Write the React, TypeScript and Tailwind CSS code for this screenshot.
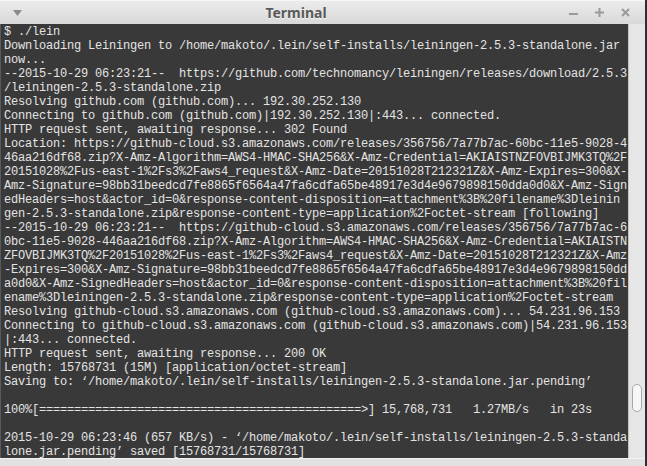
import React from "react";

const lines: string[] = [
  "$ ./lein",
  "Downloading Leiningen to /home/makoto/.lein/self-installs/leiningen-2.5.3-standalone.jar",
  "now...",
  "--2015-10-29 06:23:21--  https://github.com/technomancy/leiningen/releases/download/2.5.3",
  "/leiningen-2.5.3-standalone.zip",
  "Resolving github.com (github.com)... 192.30.252.130",
  "Connecting to github.com (github.com)|192.30.252.130|:443... connected.",
  "HTTP request sent, awaiting response... 302 Found",
  "Location: https://github-cloud.s3.amazonaws.com/releases/356756/7a77b7ac-60bc-11e5-9028-4",
  "46aa216df68.zip?X-Amz-Algorithm=AWS4-HMAC-SHA256&X-Amz-Credential=AKIAISTNZFOVBIJMK3TQ%2F",
  "20151028%2Fus-east-1%2Fs3%2Faws4_request&X-Amz-Date=20151028T212321Z&X-Amz-Expires=300&X-",
  "Amz-Signature=98bb31beedcd7fe8865f6564a47fa6cdfa65be48917e3d4e9679898150dda0d0&X-Amz-Sign",
  "edHeaders=host&actor_id=0&response-content-disposition=attachment%3B%20filename%3Dleinin",
  "gen-2.5.3-standalone.zip&response-content-type=application%2Foctet-stream [following]",
  "--2015-10-29 06:23:21--  https://github-cloud.s3.amazonaws.com/releases/356756/7a77b7ac-6",
  "0bc-11e5-9028-446aa216df68.zip?X-Amz-Algorithm=AWS4-HMAC-SHA256&X-Amz-Credential=AKIAISTN",
  "ZFOVBIJMK3TQ%2F20151028%2Fus-east-1%2Fs3%2Faws4_request&X-Amz-Date=20151028T212321Z&X-Amz",
  "-Expires=300&X-Amz-Signature=98bb31beedcd7fe8865f6564a47fa6cdfa65be48917e3d4e9679898150dd",
  "a0d0&X-Amz-SignedHeaders=host&actor_id=0&response-content-disposition=attachment%3B%20fil",
  "ename%3Dleiningen-2.5.3-standalone.zip&response-content-type=application%2Foctet-stream",
  "Resolving github-cloud.s3.amazonaws.com (github-cloud.s3.amazonaws.com)... 54.231.96.153",
  "Connecting to github-cloud.s3.amazonaws.com (github-cloud.s3.amazonaws.com)|54.231.96.153",
  "|:443... connected.",
  "HTTP request sent, awaiting response... 200 OK",
  "Length: 15768731 (15M) [application/octet-stream]",
  "Saving to: \u2018/home/makoto/.lein/self-installs/leiningen-2.5.3-standalone.jar.pending\u2019",
  "",
  "100%[" + "=".repeat(46) + ">] 15,768,731   1.27MB/s   in 23s",
  "",
  "2015-10-29 06:23:46 (657 KB/s) - \u2018/home/makoto/.lein/self-installs/leiningen-2.5.3-standa",
  "lone.jar.pending\u2019 saved [15768731/15768731]",
];

export default function App() {
  return (
    <div className="w-[647px] h-[466px] overflow-hidden flex flex-col bg-[#dedede] border-r-2 border-[#2f2f2f]">
      {/* Title bar */}
      <div className="h-[24px] flex items-center bg-gradient-to-b from-[#ececec] to-[#d8d8d8] border-t border-[#f6f6f6]">
        <div className="w-[30px] h-full flex items-center pl-[13px]">
          <svg width="9" height="6" viewBox="0 0 9 6">
            <polygon points="0,0 9,0 4.5,6" fill="#8a8a8a" />
          </svg>
        </div>
        <div
          className="flex-1 text-center text-[14px] font-bold text-[#5a5a5a] leading-none"
          style={{ fontFamily: '"Noto Sans", "Open Sans", sans-serif', textShadow: "0 1px 0 #f4f4f4" }}
        >
          Terminal
        </div>
        <div className="w-[83px] h-full flex items-center gap-[17px] pl-[7px]">
          <svg width="9" height="9" viewBox="0 0 9 9">
            <rect x="0" y="5" width="9" height="2" fill="#9a9a9a" />
          </svg>
          <svg width="9" height="9" viewBox="0 0 9 9">
            <rect x="0" y="3.5" width="9" height="2" fill="#9a9a9a" />
            <rect x="3.5" y="0" width="2" height="9" fill="#9a9a9a" />
          </svg>
          <svg width="9" height="9" viewBox="0 0 9 9">
            <path d="M1 1 L8 8 M8 1 L1 8" stroke="#9a9a9a" strokeWidth="2" />
          </svg>
        </div>
      </div>

      {/* Body */}
      <div className="h-[434px] flex">
        <div className="flex-1 bg-[#393939] border-l border-[#5a5a5a] pl-[3px] pt-[1px] overflow-hidden">
          <pre
            className="m-0 text-[12px] leading-[14px] tracking-[-0.2px] text-[#e4e4e4] whitespace-pre"
            style={{ fontFamily: '"Liberation Mono", "DejaVu Sans Mono", monospace' }}
          >
            {lines.join("\n")}
          </pre>
        </div>
        <div className="w-[17px] bg-[#e6e6e6] border-l border-[#c4c4c4] flex flex-col justify-end items-center pb-[46px]">
          <div className="w-[10px] h-[28px] rounded-[5px] bg-[#f7f7f7] border border-[#a8a8a8]" />
        </div>
      </div>

      {/* Bottom strip */}
      <div className="flex-1 bg-[#e2e2e2] border-t border-[#f4f4f4]" />
    </div>
  );
}
